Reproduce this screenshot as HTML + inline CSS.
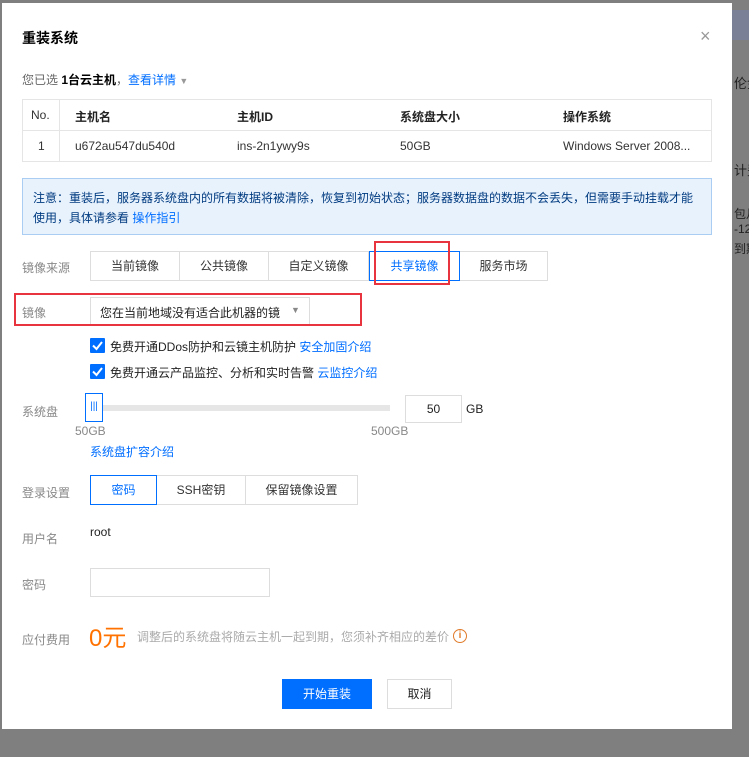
<!DOCTYPE html>
<html><head><meta charset="utf-8"><style>
*{margin:0;padding:0;box-sizing:border-box}
body{width:749px;height:757px;background:#7f7f7f;position:relative;overflow:hidden;font-family:"Liberation Sans","Noto Sans CJK SC",sans-serif;font-size:12px;color:#333}
.a{position:absolute;white-space:nowrap}
.m{position:absolute;left:2px;top:3px;width:730px;height:726px;background:#fff}
.lbl{color:#888}
.blue{color:#006eff}
.tab{position:absolute;top:251px;height:30px;border:1px solid #ddd;line-height:28px;text-align:center;background:#fff}
.cb{position:absolute;left:90px;width:15px;height:15px;background:#006eff;border-radius:1px}
.cb svg{position:absolute;left:2px;top:2px}
</style></head><body>
<div class="a" style="left:732px;top:10px;width:17px;height:30px;background:#7a8197"></div>
<div class="a" style="left:734px;top:73px;color:#222;font-size:13px">伦金</div>
<div class="a" style="left:734px;top:160px;color:#222;font-size:13px">计费</div>
<div class="a" style="left:734px;top:205px;color:#222;font-size:12px">包月</div>
<div class="a" style="left:734px;top:222px;color:#222;font-size:12px">-12-</div>
<div class="a" style="left:734px;top:240px;color:#222;font-size:12px">到期</div>
<div class="m"></div>
<div class="a" style="left:22px;top:28px;font-size:14px;font-weight:bold;color:#000">重装系统</div>
<div class="a" style="left:700px;top:26px;font-size:18px;color:#999">×</div>
<div class="a" style="left:22px;top:71px;color:#666">您已选 <b style="color:#000">1台云主机</b>，<span class="blue">查看详情</span> <span style="color:#999;font-size:9px">▼</span></div>
<div class="a" style="left:22px;top:99px;width:690px;height:63px;border:1px solid #e5e5e5"></div>
<div class="a" style="left:22px;top:130px;width:690px;height:1px;background:#e5e5e5"></div>
<div class="a" style="left:59px;top:100px;width:1px;height:61px;background:#e5e5e5"></div>
<div class="a" style="left:31px;top:108px;color:#333">No.</div>
<div class="a" style="left:75px;top:108px;font-weight:bold;color:#222">主机名</div>
<div class="a" style="left:237px;top:108px;font-weight:bold;color:#222">主机ID</div>
<div class="a" style="left:400px;top:108px;font-weight:bold;color:#222">系统盘大小</div>
<div class="a" style="left:563px;top:108px;font-weight:bold;color:#222">操作系统</div>
<div class="a" style="left:38px;top:139px">1</div>
<div class="a" style="left:75px;top:139px">u672au547du540d</div>
<div class="a" style="left:237px;top:139px">ins-2n1ywy9s</div>
<div class="a" style="left:400px;top:139px">50GB</div>
<div class="a" style="left:563px;top:139px">Windows Server 2008...</div>
<div class="a" style="left:22px;top:178px;width:690px;height:57px;background:#e8f2fd;border:1px solid #aacdf3"></div>
<div class="a" style="left:33px;top:188px;color:#003b80;line-height:20px">注意：重装后，服务器系统盘内的所有数据将被清除，恢复到初始状态；服务器数据盘的数据不会丢失，但需要手动挂载才能<br>使用，具体请参看 <span class="blue">操作指引</span></div>
<div class="a lbl" style="left:22px;top:259px">镜像来源</div>
<div class="tab" style="left:90px;width:90px">当前镜像</div>
<div class="tab" style="left:179px;width:90px">公共镜像</div>
<div class="tab" style="left:268px;width:101px">自定义镜像</div>
<div class="tab" style="left:459px;width:89px">服务市场</div>
<div class="tab blue" style="left:369px;width:91px;border-color:#006eff">共享镜像</div>
<div class="a" style="left:374px;top:241px;width:76px;height:44px;border:2px solid #e8343f"></div>
<div class="a lbl" style="left:22px;top:304px">镜像</div>
<div class="a" style="left:90px;top:297px;width:220px;height:28px;border:1px solid #ddd"></div>
<div class="a" style="left:100px;top:304px;color:#222">您在当前地域没有适合此机器的镜</div>
<div class="a" style="left:291px;top:305px;color:#888;font-size:9px">▼</div>
<div class="a" style="left:14px;top:293px;width:348px;height:33px;border:2px solid #e8343f"></div>
<div class="cb" style="top:338px"><svg width="11" height="11"><path d="M1 5.5 L4.5 9 L10 2" stroke="#fff" stroke-width="2" fill="none"/></svg></div>
<div class="a" style="left:110px;top:338px;color:#222">免费开通DDos防护和云镜主机防护 <span class="blue">安全加固介绍</span></div>
<div class="cb" style="top:364px"><svg width="11" height="11"><path d="M1 5.5 L4.5 9 L10 2" stroke="#fff" stroke-width="2" fill="none"/></svg></div>
<div class="a" style="left:110px;top:364px;color:#222">免费开通云产品监控、分析和实时告警 <span class="blue">云监控介绍</span></div>
<div class="a lbl" style="left:22px;top:403px">系统盘</div>
<div class="a" style="left:100px;top:405px;width:290px;height:6px;background:#e6e6e6"></div>
<div class="a" style="left:85px;top:393px;width:18px;height:29px;border:1px solid #006eff;background:#fff;color:#006eff;font-size:10px;text-align:center;line-height:26px">|||</div>
<div class="a" style="left:405px;top:395px;width:57px;height:28px;border:1px solid #ddd;text-align:center;line-height:26px;color:#222">50</div>
<div class="a" style="left:466px;top:402px;color:#222">GB</div>
<div class="a" style="left:75px;top:424px;color:#888">50GB</div>
<div class="a" style="left:371px;top:424px;color:#888">500GB</div>
<div class="a blue" style="left:90px;top:443px">系统盘扩容介绍</div>
<div class="a lbl" style="left:22px;top:484px">登录设置</div>
<div class="tab" style="left:156px;top:475px;width:90px">SSH密钥</div>
<div class="tab" style="left:245px;top:475px;width:113px">保留镜像设置</div>
<div class="tab blue" style="left:90px;top:475px;width:67px;border-color:#006eff">密码</div>
<div class="a lbl" style="left:22px;top:530px">用户名</div>
<div class="a" style="left:90px;top:525px;color:#222">root</div>
<div class="a lbl" style="left:22px;top:576px">密码</div>
<div class="a" style="left:90px;top:568px;width:180px;height:29px;border:1px solid #ddd"></div>
<div class="a lbl" style="left:22px;top:631px">应付费用</div>
<div class="a" style="left:89px;top:618px;color:#ff7200;font-size:24px">0元</div>
<div class="a" style="left:137px;top:628px;color:#aaa">调整后的系统盘将随云主机一起到期，您须补齐相应的差价</div>
<div class="a" style="left:453px;top:629px;width:14px;height:14px;border:1px solid #e07b2a;border-radius:50%;color:#e07b2a;font-size:10px;text-align:center;line-height:12px;font-weight:bold">i</div>
<div class="a" style="left:282px;top:679px;width:90px;height:30px;background:#006eff;color:#fff;text-align:center;line-height:30px">开始重装</div>
<div class="a" style="left:387px;top:679px;width:65px;height:30px;border:1px solid #ddd;color:#222;text-align:center;line-height:28px">取消</div>
</body></html>
